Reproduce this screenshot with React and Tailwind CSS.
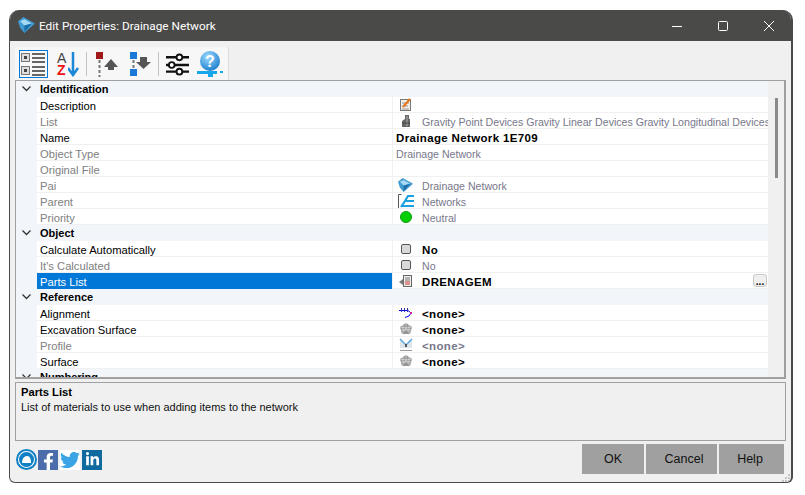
import { FaFacebookF, FaTwitter, FaLinkedinIn } from 'react-icons/fa';

function Gem({ size = 16 }) {
  return (
    <svg width={size} height={size} viewBox="0 0 16 16">
      <path d="M0 4 L5 0 L16 6 L6 15 L2 10 Z" fill="#3f9bd2" />
      <path d="M2 4 L6 2 L13 6 L6 8 Z" fill="#a5d8f2" />
      <path d="M6 8 L13 6 L6 14 Z" fill="#1c6ea8" />
    </svg>
  );
}

function NotesIcon() {
  return (
    <svg width="12" height="14" viewBox="0 0 12 14">
      <rect x="0.500" y="1.500" width="10" height="11" fill="#f3efe6" stroke="#777" />
      <path d="M2 5h7M2 8h6M2 11h7" stroke="#999" />
      <path d="M3 9 L10 1" stroke="#e8761c" strokeWidth="2" />
    </svg>
  );
}

function ManholeIcon() {
  return (
    <svg width="12" height="14" viewBox="0 0 12 14">
      <path d="M5 1h4v4h1v8H2V7l3-2z" fill="#666" />
      <path d="M6 2h2v10H6z" fill="#8b8b8b" />
      <path d="M2 9h8" stroke="#444" />
    </svg>
  );
}

function NetworksIcon() {
  return (
    <svg width="16" height="16" viewBox="0 0 16 16">
      <path d="M3.500 1.500H0.500V15.500H3.500" fill="none" stroke="#555" />
      <path d="M3 14 L7 8 L10 3 H16 M7 8 H16 M3 13 H16" fill="none" stroke="#18a0e0" strokeWidth="2.200" />
    </svg>
  );
}

function PartsIcon() {
  return (
    <svg width="14" height="14" viewBox="0 0 14 14">
      <path d="M0 8 L4 5 V11 Z" fill="#777" />
      <rect x="4.500" y="1.500" width="8" height="11" fill="#eee" stroke="#666" />
      <path d="M6 4h5M6 6h5" stroke="#777" />
      <path d="M6 8h5M6 10h5" stroke="#c0392b" />
    </svg>
  );
}

function AlignmentIcon() {
  return (
    <svg width="14" height="14" viewBox="0 0 14 14">
      <path d="M0 4.500 H9 L12 7 L10 10 L6 11.500" fill="none" stroke="#0000ee" />
      <path d="M2.500 2v4M5.500 2v4M8.500 2v4" stroke="#3030a0" />
      <path d="M12 6v2" stroke="#d02090" strokeWidth="2" />
    </svg>
  );
}

function SurfaceIcon() {
  return (
    <svg width="14" height="14" viewBox="0 0 14 14">
      <path d="M7 1 L13 5 L11 12 H3 L1 5 Z" fill="#949494" />
      <path
        d="M7 1 L7 6 M1 5 L7 6 L13 5 M3 12 L7 6 L11 12 M4 3 L4 9 M10 3 L10 9 M2 8 H12"
        fill="none"
        stroke="#d8d8d8"
        strokeWidth="0.800"
      />
    </svg>
  );
}

function ProfileIcon() {
  return (
    <svg width="14" height="14" viewBox="0 0 14 14">
      <path d="M1 1 L7 7 L13 1 V10 H1 Z" fill="#dfe6ea" />
      <path d="M1 1 L7 7 L13 1" fill="none" stroke="#5fa8dc" strokeWidth="1.500" />
      <rect x="6" y="6" width="2" height="3" fill="#555" />
      <path d="M1 12.500H13" stroke="#999" />
    </svg>
  );
}

const Check = () => (
  <div className="w-[10px] h-[10px] rounded-[2px] border border-[#555] bg-[#d8d8d8] shadow-[inset_0_0_1px_#fff]" />
);

const Dot = () => <div className="w-3 h-3 rounded-full bg-[#00d000] border border-[#0a9a0a]" />;

const rows = [
  { section: 'Identification' },
  { name: 'Description', icon: <NotesIcon /> },
  { name: 'List', dim: true, icon: <ManholeIcon />, value: 'Gravity Point Devices Gravity Linear Devices Gravity Longitudinal Devices', valueDim: true },
  { name: 'Name', flush: true, value: 'Drainage Network 1E709', bold: true },
  { name: 'Object Type', dim: true, flush: true, value: 'Drainage Network', valueDim: true },
  { name: 'Original File', dim: true },
  { name: 'Pai', dim: true, icon: <Gem size={15} />, value: 'Drainage Network', valueDim: true },
  { name: 'Parent', dim: true, icon: <NetworksIcon />, value: 'Networks', valueDim: true },
  { name: 'Priority', dim: true, icon: <Dot />, value: 'Neutral', valueDim: true },
  { section: 'Object' },
  { name: 'Calculate Automatically', icon: <Check />, value: 'No', bold: true },
  { name: "It's Calculated", dim: true, icon: <Check />, value: 'No', valueDim: true },
  { name: 'Parts List', selected: true, icon: <PartsIcon />, value: 'DRENAGEM', bold: true, more: true },
  { section: 'Reference' },
  { name: 'Alignment', icon: <AlignmentIcon />, value: '<none>', bold: true },
  { name: 'Excavation Surface', icon: <SurfaceIcon />, value: '<none>', bold: true },
  { name: 'Profile', dim: true, icon: <ProfileIcon />, value: '<none>', bold: true, valueDim: true },
  { name: 'Surface', icon: <SurfaceIcon />, value: '<none>', bold: true },
  { section: 'Numbering' },
];

function Row({ row }) {
  if (row.section) {
    return (
      <div className="h-[16px] shrink-0 flex items-center bg-[#f2f6fb]">
        <div className="w-[21px] shrink-0 flex justify-center">
          <svg width="9" height="6" viewBox="0 0 9 6">
            <path d="M0.500 0.500 L4.500 4.500 L8.500 0.500" fill="none" stroke="#333" strokeWidth="1.300" />
          </svg>
        </div>
        <span className="pl-[3px] text-[11px] font-bold text-black">{row.section}</span>
      </div>
    );
  }
  return (
    <div className="h-[16px] shrink-0 flex bg-[#f2f6fb]">
      <div className="w-[21px] shrink-0" />
      <div
        className={`w-[355px] shrink-0 pl-[3px] pt-[2px] flex items-center border-b ${
          row.selected
            ? 'bg-[#0078d7] text-white border-[#0078d7]'
            : `bg-white border-[#f0f0f0] ${row.dim ? 'text-[#808080]' : 'text-black'}`
        }`}
      >
        {row.name}
      </div>
      <div className="flex-1 min-w-0 flex items-center bg-white border-b border-l border-[#f0f0f0] overflow-hidden relative">
        {row.icon && <div className="w-[29px] pt-[1px] shrink-0 flex items-center justify-center pr-[4px]">{row.icon}</div>}
        <span
          className={`whitespace-nowrap pt-[2px] ${row.flush ? 'pl-[3px]' : ''} ${
            row.bold ? 'font-bold text-[11.5px] tracking-[0.35px]' : 'text-[10.6px]'
          } ${row.valueDim ? 'text-[#77778a]' : 'text-black'}`}
        >
          {row.value}
        </span>
        {row.more && (
          <div className="absolute right-[1px] top-[1px] w-[14px] h-[13px] rounded-[3px] border border-[#c8c8c8] bg-[#efefef] flex items-end justify-center text-[10px] font-bold leading-[9px] text-black">
            ...
          </div>
        )}
      </div>
    </div>
  );
}

function ToolButton({ active, children }) {
  return (
    <div className={`h-[28px] flex items-center justify-center ${active ? 'border border-[#0078d7] w-[29px] bg-[#f8f8f8]' : ''}`}>
      {children}
    </div>
  );
}

const ToolSep = () => <div className="w-px h-[24px] bg-[#c4c4c4]" />;

function Toolbar() {
  return (
    <div className="w-[214px] h-[33px] bg-[#f7f7f7] rounded-t-[3px] flex items-center pl-[4px] gap-[5px] border-r border-[#dcdcdc]">
      <ToolButton active>
        <svg width="25" height="26" viewBox="0 0 25 26">
          <rect x="0.500" y="2.500" width="8" height="8" fill="#ddd" stroke="#777" />
          <rect x="3" y="5" width="3" height="3" fill="#444" />
          <rect x="0.500" y="15.500" width="8" height="8" fill="#ddd" stroke="#777" />
          <rect x="3" y="18" width="3" height="3" fill="#444" />
          <path d="M11 3h13M11 7h13M11 11h13M11 16h13M11 20h13M11 24h13" stroke="#666" strokeWidth="2" />
        </svg>
      </ToolButton>
      <div className="ml-[2px] w-[26px] h-[27px] flex">
        <div className="w-[13px] pl-[2px] flex flex-col text-[14px] leading-[12px] pt-[2px]">
          <span className="text-[#444]">A</span>
          <span className="font-bold text-[#ee1111]">Z</span>
        </div>
        <svg width="13" height="27" viewBox="13 0 13 27">
          <path d="M18 2V24M13 18L18 25L23 18" fill="none" stroke="#1e88d8" strokeWidth="2.500" />
        </svg>
      </div>
      <ToolSep />
      <svg width="24" height="26" viewBox="0 0 24 26" className="ml-[4px]">
        <rect x="0" y="1" width="7" height="7" fill="#a01818" />
        <path d="M3.500 9V26" stroke="#777" strokeWidth="2" strokeDasharray="3 2" />
        <path d="M8 16L15 8L22 16H18V19H12V16Z" fill="#555" />
      </svg>
      <svg width="22" height="26" viewBox="0 0 22 26" className="ml-[5px]">
        <rect x="0" y="1" width="7" height="7" fill="#1a78d8" />
        <rect x="0" y="18" width="7" height="7" fill="#1a78d8" />
        <path d="M3.500 9V17" stroke="#777" strokeWidth="2" strokeDasharray="3 2" />
        <path d="M10 6H17V11H21L13.500 18L6 11H10Z" fill="#555" />
      </svg>
      <div className="ml-[1px]">
        <ToolSep />
      </div>
      <svg width="23" height="24" viewBox="0 0 24 24" className="ml-[2px]">
        <path d="M0 5H24M0 13H24M0 20H24" stroke="#111" strokeWidth="2.500" />
        <circle cx="14" cy="5" r="3" fill="#fff" stroke="#111" strokeWidth="2" />
        <circle cx="6" cy="13" r="3" fill="#fff" stroke="#111" strokeWidth="2" />
        <circle cx="14" cy="20" r="3" fill="#fff" stroke="#111" strokeWidth="2" />
      </svg>
      <svg width="26" height="26" viewBox="0 0 26 26" className="ml-[3px]">
        <defs>
          <radialGradient id="ball" cx="0.400" cy="0.300" r="0.800">
            <stop offset="0" stopColor="#9fdcff" />
            <stop offset="1" stopColor="#0d74c8" />
          </radialGradient>
        </defs>
        <circle cx="13" cy="10" r="10" fill="url(#ball)" />
        <text x="13" y="16" textAnchor="middle" fontSize="16" fontWeight="700" fontFamily="Liberation Sans, sans-serif" fill="#fff">?</text>
        <path d="M0 20H26V22H23V20H20V23H16V26H11V23H0Z" fill="#16a8ea" />
      </svg>
    </div>
  );
}

function Footer() {
  return (
    <div className="relative flex items-start justify-between mt-[3px] pr-[2px]">
      <div className="flex items-center gap-[1px] mt-[5px] ml-[1px]">
        <div className="w-[21px] h-[21px] rounded-full border-2 border-[#0f80c4] bg-white flex items-center justify-center">
          <div className="w-[15px] h-[15px] rounded-full bg-[#0f80c4] flex items-center justify-center">
            <svg width="9" height="7" viewBox="0 0 9 7">
              <path d="M0 7C0 3 2 0 5 0C8 0 9 3 9 7Z" fill="#fff" />
            </svg>
          </div>
        </div>
        <div className="w-[20px] h-[20px] bg-[#4c6cab] flex items-end justify-center text-white overflow-hidden">
          <FaFacebookF size={17} />
        </div>
        <div className="ml-[1px] w-[20px] h-[20px] bg-white flex items-center justify-center text-[#3aa4e4]">
          <FaTwitter size={20} />
        </div>
        <div className="ml-[1px] w-[20px] h-[20px] bg-[#0f6a9f] flex items-center justify-center text-white">
          <FaLinkedinIn size={15} />
        </div>
      </div>
      <div className="flex gap-[2px] text-[12.5px] text-[#111] font-['Liberation_Sans',sans-serif]">
        <div className="w-[62px] h-[30px] bg-[#a0a0a0] flex items-center justify-center">OK</div>
        <div className="w-[71px] h-[30px] bg-[#a0a0a0] flex items-center justify-center pl-[5px]">Cancel</div>
        <div className="w-[65px] h-[30px] bg-[#a0a0a0] flex items-center justify-center pr-[3px]">Help</div>
      </div>
      <svg width="8" height="8" viewBox="0 0 8 8" className="absolute right-[-4px] top-[30px]">
        <path d="M6 0h2v2H6zM3 3h2v2H3zM6 3h2v2H6zM0 6h2v2H0zM3 6h2v2H3zM6 6h2v2H6z" fill="#c4c4c4" />
      </svg>
    </div>
  );
}

export default function App() {
  return (
    <div className="w-[805px] h-[495px] bg-white pt-[10px] pl-[9px] font-['Liberation_Sans',sans-serif] text-[11.2px] leading-[16px]">
      <div className="w-[784px] h-[473px] flex flex-col bg-[#f0f0f0] rounded-t-[10px] rounded-b-[6px] border-l border-r-2 border-b border-[#4a4a48] overflow-hidden">
        <div className="h-[31px] shrink-0 bg-[#4a4a48] flex items-center text-white pl-[8px]">
          <Gem size={17} />
          <span className="ml-[4px] text-[11.8px] font-['Roboto',sans-serif]">Edit Properties: Drainage Network</span>
          <div className="ml-auto flex items-center pl-[1px]">
            <svg width="46" height="30" viewBox="0 0 46 30">
              <path d="M18 15.500H28" stroke="#fff" />
            </svg>
            <svg width="46" height="30" viewBox="0 0 46 30">
              <rect x="18.500" y="10.500" width="9" height="9" rx="1" fill="none" stroke="#fff" />
            </svg>
            <svg width="45" height="30" viewBox="0 0 45 30">
              <path d="M18 10L28 20M28 10L18 20" stroke="#fff" />
            </svg>
          </div>
        </div>
        <div className="flex-1 flex flex-col px-[5px] pt-[6px] min-h-0">
          <Toolbar />
          <div className="w-[771px] h-[299px] shrink-0 border-t border-l border-r-2 border-b-2 border-[#a0a0a0] flex overflow-hidden">
            <div className="flex-1 min-w-0 flex flex-col">
              {rows.map((row) => (
                <Row key={row.section || row.name} row={row} />
              ))}
            </div>
            <div className="w-[16px] shrink-0 bg-[#f0f0f0] pt-[17px] pl-[7px]">
              <div className="w-[3px] h-[80px] bg-[#8a8a8a]" />
            </div>
          </div>
          <div className="w-[771px] h-[59px] shrink-0 mt-[3px] border border-[#a0a0a0] px-[5px] pt-[2px]">
            <div className="font-bold text-black leading-[15px]">Parts List</div>
            <div className="text-[11px] leading-[14px] text-[#111]">List of materials to use when adding items to the network</div>
          </div>
          <Footer />
        </div>
      </div>
    </div>
  );
}
